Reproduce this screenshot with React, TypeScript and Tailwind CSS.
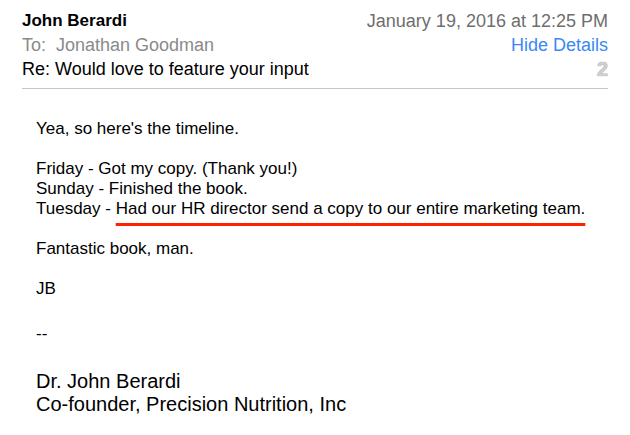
import React from "react";

export default function App() {
  return (
    <div className="w-[630px] h-[435px] bg-white text-black font-['Liberation_Sans',Arial,sans-serif] overflow-hidden">
      <div className="px-[22px] pt-[9px]">
        <div className="flex justify-between">
          <div className="flex flex-col text-[18px] leading-[24px]">
            <span className="font-bold text-[17px]">John Berardi</span>
            <span className="text-[#8a8a8a]">
              To:&nbsp; Jonathan Goodman
            </span>
            <span>Re: Would love to feature your input</span>
          </div>
          <div className="flex flex-col items-end text-[18px] leading-[24px]">
            <span className="text-[#6e6e6e]">January 19, 2016 at 12:25 PM</span>
            <span className="text-[#3b88f5]">Hide Details</span>
            <span className="text-[20px] font-bold text-[#d0d0d0] [text-shadow:0_0_1px_#7a7a7a]">
              2
            </span>
          </div>
        </div>
        <div className="mt-[7px] h-px bg-[#c6c6c6]" />
      </div>

      <div className="pl-[36px] pt-[30px] text-[17px] leading-[20px]">
        <p>Yea, so here's the timeline.</p>
        <p className="mt-[20px]">Friday - Got my copy. (Thank you!)</p>
        <p>Sunday - Finished the book.</p>
        <p>
          Tuesday -{" "}
          <span className="underline decoration-[3px] decoration-[#ff2200] underline-offset-[9px]">
            Had our HR director send a copy to our entire marketing team.
          </span>
        </p>
        <p className="mt-[20px]">Fantastic book, man.</p>
        <p className="mt-[20px]">JB</p>
        <p className="mt-[25px]">--</p>
        <div className="mt-[26px] text-[20px] leading-[23px]">
          <p>Dr. John Berardi</p>
          <p>Co-founder, Precision Nutrition, Inc</p>
        </div>
      </div>
    </div>
  );
}
